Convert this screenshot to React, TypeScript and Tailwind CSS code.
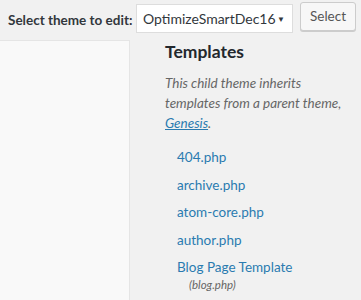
export default function App() {
  const templates = ["404.php", "archive.php", "atom-core.php", "author.php"];

  return (
    <div className="h-[300px] w-[361px] overflow-hidden bg-[#f1f1f1] font-['Lato',sans-serif] text-[#444]">
      {/* Theme picker */}
      <div className="flex h-[40px] items-start whitespace-nowrap pl-[8px] pt-[2px]">
        <span className="mt-[8px] w-[128px] text-[13.5px] font-bold text-[#32373c]">Select theme to edit:</span>
        <div className="mt-[2px] flex h-[29px] w-[157px] items-center justify-between border border-[#ddd] bg-white pl-[6px] pr-[7px]">
          <span className="text-[14px] text-[#32373c]">OptimizeSmartDec16</span>
          <span className="text-[8px] text-[#32373c]">▼</span>
        </div>
        <button className="ml-[7px] h-[29px] w-[56px] rounded-[3px] border border-[#ccc] bg-[#f7f7f7] text-[13.5px] text-[#555] shadow-[0_1px_0_#ccc]">
          Select
        </button>
      </div>

      <div className="flex">
        {/* Editor area */}
        <div className="h-[260px] w-[130px] border-r border-t border-[#e5e5e5] bg-[#f9f9f9]" />

        {/* Sidebar */}
        <div className="pl-[35px] pt-[1px]">
          <h2 className="text-[17.5px] font-bold leading-[22px] text-[#23282d]">Templates</h2>
          <p className="mt-[10px] w-[190px] text-[13.5px] italic leading-[20px] text-[#666]">
            This child theme inherits templates from a parent theme,{" "}
            <span className="text-[#2a7bb0] underline">Genesis</span>.
          </p>
          <ul className="mt-[14px] pl-[12px]">
            {templates.map((t) => (
              <li key={t} className="h-[27.5px] text-[13.5px] leading-[20px] text-[#2a7bb0]">
                {t}
              </li>
            ))}
            <li className="text-[13.5px] leading-[20px] text-[#2a7bb0]">
              Blog Page Template
              <div className="pl-[12px] text-[11.5px] italic leading-[16px] text-[#666]">(blog.php)</div>
            </li>
          </ul>
        </div>
      </div>
    </div>
  );
}
